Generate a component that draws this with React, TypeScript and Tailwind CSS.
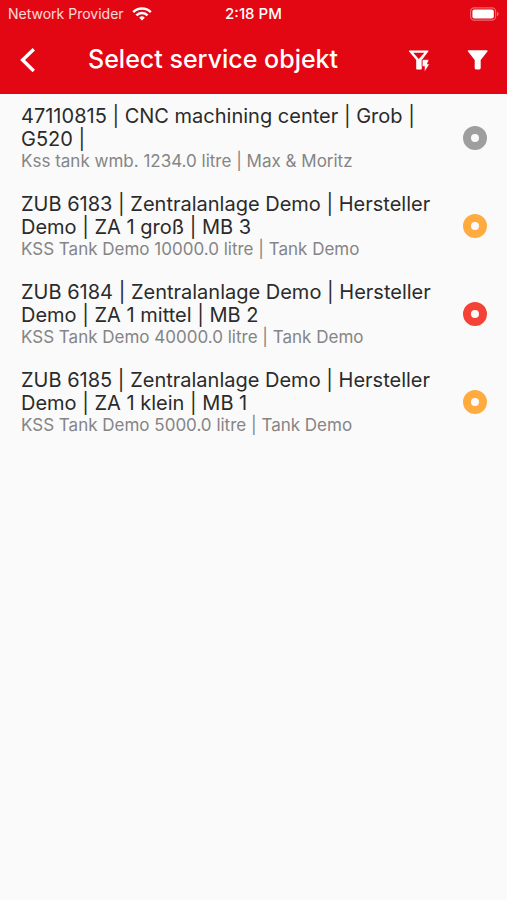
const objects = [
  {
    id: '47110815',
    title: '47110815 | CNC machining center | Grob | G520 |',
    details: 'Kss tank wmb. 1234.0 litre | Max & Moritz',
    color: 'text-[#9e9e9e]',
  },
  {
    id: '6183',
    title: 'ZUB 6183 | Zentralanlage Demo | Hersteller Demo | ZA 1 groß | MB 3',
    details: 'KSS Tank Demo 10000.0 litre | Tank Demo',
    color: 'text-[#ffab40]',
  },
  {
    id: '6184',
    title: 'ZUB 6184 | Zentralanlage Demo | Hersteller Demo | ZA 1 mittel | MB 2',
    details: 'KSS Tank Demo 40000.0 litre | Tank Demo',
    color: 'text-[#f44336]',
  },
  {
    id: '6185',
    title: 'ZUB 6185 | Zentralanlage Demo | Hersteller Demo | ZA 1 klein | MB 1',
    details: 'KSS Tank Demo 5000.0 litre | Tank Demo',
    color: 'text-[#ffab40]',
  },
];

function StatusBar() {
  return (
    <div className="grid grid-cols-3 items-center h-7 px-2 text-sm">
      <div className="flex items-center gap-2 whitespace-nowrap text-white/85">
        <span>Network Provider</span>
        <svg viewBox="0 0 20 14" className="w-5 h-[14px] flex-shrink-0 text-white" fill="none" stroke="currentColor" strokeWidth="2.5">
          <path d="M1.2 5.2a12.4 12.4 0 0 1 17.6 0" />
          <path d="M4.4 8.4a7.9 7.9 0 0 1 11.2 0" />
          <path d="M10 13.6l-2.8-2.9a4 4 0 0 1 5.6 0z" fill="currentColor" stroke="none" />
        </svg>
      </div>
      <span className="text-center text-[15px] font-medium">2:18 PM</span>
      <svg viewBox="0 0 31 14" className="w-[31px] h-[14px] justify-self-end" fill="none">
        <rect x="2.6" y="0.8" width="25" height="12.4" rx="3.6" stroke="white" strokeOpacity="0.4" strokeWidth="1.2" />
        <rect x="4.4" y="2.4" width="21.4" height="9.2" rx="2" fill="white" />
        <path d="M29.2 4.8c1.8.7 1.8 3.7 0 4.4z" fill="white" fillOpacity="0.5" />
      </svg>
    </div>
  );
}

export default function App() {
  return (
    <div className="min-h-screen bg-[#fafafa] font-['Inter','Liberation_Sans',sans-serif]">
      <header className="bg-[#e30613] text-white">
        <StatusBar />
        <div className="flex items-center h-[66px] pb-[2px] pl-4 pr-[17px]">
          <button type="button" aria-label="Back" className="w-6 h-8 flex items-center justify-center">
            <svg viewBox="0 0 24 32" className="w-6 h-8" fill="none" stroke="currentColor" strokeWidth="3.4">
              <path d="M17.8 5.2L6.6 16l11.2 11" />
            </svg>
          </button>
          <h1 className="flex-1 pl-12 text-[25px] font-medium whitespace-nowrap">Select service objekt</h1>
          <div className="flex items-center gap-[34px]">
            <button type="button" aria-label="Quick filter">
              <svg viewBox="0 0 24 24" className="w-6 h-6" fill="none">
                <path d="M1.6 2.4h18.2c.6 0 .9.7.5 1.2L13.8 12v8.4c0 .6-.4 1-1 1H9.2c-.6 0-1-.4-1-1V12L1.1 3.6c-.4-.5-.1-1.2.5-1.2z" fill="white" />
                <path d="M5.2 4.7h11.2L10.8 11z" fill="#e30613" />
                <path d="M14.2 11.6h6.8l-1.6 4.4h2.2l-5.2 8.2v-5.8h-2.2z" fill="white" stroke="#e30613" strokeWidth="0.7" />
              </svg>
            </button>
            <button type="button" aria-label="Filter">
              <svg viewBox="0 0 24 24" className="w-6 h-6" fill="currentColor">
                <path d="M2.6 2.2h18.2c.8 0 1.1.8.6 1.4l-6.7 8.3v8.2c0 .9-.6 1.4-1.4 1.4h-3.2c-.8 0-1.4-.5-1.4-1.4v-8.2L2 3.6c-.5-.6-.2-1.4.6-1.4z" />
              </svg>
            </button>
          </div>
        </div>
      </header>

      <ul>
        {objects.map((item) => (
          <li key={item.id}>
            <button type="button" className="w-full flex items-center justify-between text-left py-[11px] pl-[21px] pr-5">
              <span className="flex-1 pr-8">
                <span className="block text-xl leading-[23px] text-[#2b2b2b]">{item.title}</span>
                <span className="block text-[17px] leading-5 text-[#858585]">{item.details}</span>
              </span>
              <svg viewBox="0 0 24 24" className={`w-6 h-6 flex-shrink-0 ${item.color}`} fill="none" stroke="currentColor" strokeWidth="8">
                <circle cx="12" cy="12" r="8" />
              </svg>
            </button>
          </li>
        ))}
      </ul>
    </div>
  );
}
